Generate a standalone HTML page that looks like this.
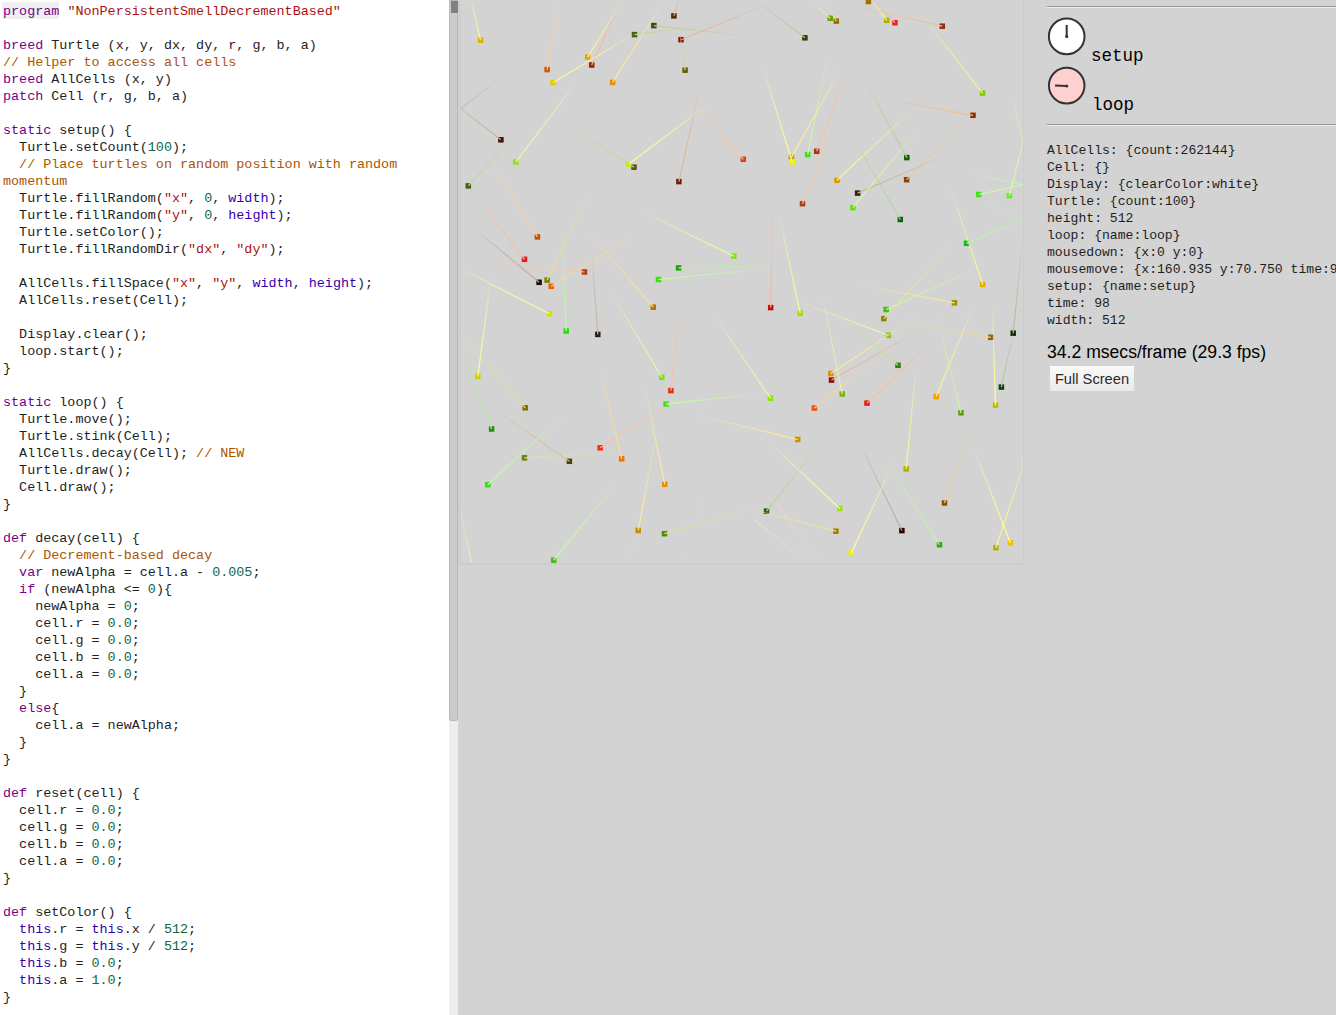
<!DOCTYPE html>
<html><head><meta charset="utf-8">
<style>
html,body{margin:0;padding:0;width:1336px;height:1015px;overflow:hidden;background:#d3d3d3;}
#code{position:absolute;left:0;top:0;width:449px;height:1015px;background:#fff;overflow:hidden;}
#lines{position:absolute;left:3px;top:3px;font-family:"Liberation Mono",monospace;font-size:13.42px;line-height:17px;color:#1e1e1e;white-space:pre;}
.ln{height:17px;}
i{font-style:normal;}
i.k{color:#708;} i.s{color:#a11;} i.c{color:#a50;} i.n{color:#164;} i.v{color:#30a;}
#hl{position:absolute;left:2px;top:2px;width:57px;height:17px;background:#f0f0f0;}
#track{position:absolute;left:449px;top:0;width:9px;height:1015px;background:#ededed;}
#thumb{position:absolute;left:449px;top:0;width:7px;height:719px;background:#cbcbcb;border:1px solid #b9b9b9;border-radius:0 0 2px 2px;}
#arrow{position:absolute;left:451px;top:1px;width:7px;height:12px;background:#808080;}
#canvas{position:absolute;left:458px;top:0;width:566px;height:565px;}
#panel{position:absolute;left:1047px;top:0;width:289px;}
.hr{position:absolute;left:1047px;width:289px;height:1px;background:#9a9a9a;border-bottom:1px solid #eee;}
.lbl{position:absolute;font-family:"Liberation Mono",monospace;font-size:17.5px;color:#000;}
#state{position:absolute;left:1047px;top:142px;font-family:"Liberation Mono",monospace;font-size:13.1px;line-height:17px;white-space:pre;color:#1e1e1e;}
#fps{position:absolute;left:1047px;top:342px;font-family:"Liberation Sans",sans-serif;font-size:17.6px;color:#000;white-space:pre;}
#fs{position:absolute;left:1050px;top:366px;width:84px;height:25px;background:linear-gradient(#fafafa,#e9e9e9);font-family:"Liberation Sans",sans-serif;font-size:14.67px;color:#2a2a2a;line-height:26px;text-align:center;}
</style></head><body>
<div id="code"><div id="hl"></div><div id="lines"><div class="ln"><i class="k">program</i> <i class="s">"NonPersistentSmellDecrementBased"</i></div><div class="ln">&#8203;</div><div class="ln"><i class="k">breed</i> Turtle (x, y, dx, dy, r, g, b, a)</div><div class="ln"><i class="c">// Helper to access all cells</i></div><div class="ln"><i class="k">breed</i> AllCells (x, y)</div><div class="ln"><i class="k">patch</i> Cell (r, g, b, a)</div><div class="ln">&#8203;</div><div class="ln"><i class="k">static</i> setup() {</div><div class="ln">  Turtle.setCount(<i class="n">100</i>);</div><div class="ln">  <i class="c">// Place turtles on random position with random</i></div><div class="ln"><i class="c">momentum</i></div><div class="ln">  Turtle.fillRandom(<i class="s">"x"</i>, <i class="n">0</i>, <i class="v">width</i>);</div><div class="ln">  Turtle.fillRandom(<i class="s">"y"</i>, <i class="n">0</i>, <i class="v">height</i>);</div><div class="ln">  Turtle.setColor();</div><div class="ln">  Turtle.fillRandomDir(<i class="s">"dx"</i>, <i class="s">"dy"</i>);</div><div class="ln">&#8203;</div><div class="ln">  AllCells.fillSpace(<i class="s">"x"</i>, <i class="s">"y"</i>, <i class="v">width</i>, <i class="v">height</i>);</div><div class="ln">  AllCells.reset(Cell);</div><div class="ln">&#8203;</div><div class="ln">  Display.clear();</div><div class="ln">  loop.start();</div><div class="ln">}</div><div class="ln">&#8203;</div><div class="ln"><i class="k">static</i> loop() {</div><div class="ln">  Turtle.move();</div><div class="ln">  Turtle.stink(Cell);</div><div class="ln">  AllCells.decay(Cell); <i class="c">// NEW</i></div><div class="ln">  Turtle.draw();</div><div class="ln">  Cell.draw();</div><div class="ln">}</div><div class="ln">&#8203;</div><div class="ln"><i class="k">def</i> decay(cell) {</div><div class="ln">  <i class="c">// Decrement-based decay</i></div><div class="ln">  <i class="k">var</i> newAlpha = cell.a - <i class="n">0.005</i>;</div><div class="ln">  <i class="k">if</i> (newAlpha &lt;= <i class="n">0</i>){</div><div class="ln">    newAlpha = <i class="n">0</i>;</div><div class="ln">    cell.r = <i class="n">0.0</i>;</div><div class="ln">    cell.g = <i class="n">0.0</i>;</div><div class="ln">    cell.b = <i class="n">0.0</i>;</div><div class="ln">    cell.a = <i class="n">0.0</i>;</div><div class="ln">  }</div><div class="ln">  <i class="k">else</i>{</div><div class="ln">    cell.a = newAlpha;</div><div class="ln">  }</div><div class="ln">}</div><div class="ln">&#8203;</div><div class="ln"><i class="k">def</i> reset(cell) {</div><div class="ln">  cell.r = <i class="n">0.0</i>;</div><div class="ln">  cell.g = <i class="n">0.0</i>;</div><div class="ln">  cell.b = <i class="n">0.0</i>;</div><div class="ln">  cell.a = <i class="n">0.0</i>;</div><div class="ln">}</div><div class="ln">&#8203;</div><div class="ln"><i class="k">def</i> setColor() {</div><div class="ln">  <i class="v">this</i>.r = <i class="v">this</i>.x / <i class="n">512</i>;</div><div class="ln">  <i class="v">this</i>.g = <i class="v">this</i>.y / <i class="n">512</i>;</div><div class="ln">  <i class="v">this</i>.b = <i class="n">0.0</i>;</div><div class="ln">  <i class="v">this</i>.a = <i class="n">1.0</i>;</div><div class="ln">}</div></div></div>
<div id="track"></div><div id="thumb"></div><div id="arrow"></div>
<svg id="canvas" width="566" height="565" viewBox="458 0 566 565">
<path d="M459.5 0 V564 H1024 V0" fill="none" stroke="#cbcbcb" stroke-width="1.6"/>
<clipPath id="cclip"><rect x="460" y="0" width="563" height="563"/></clipPath><defs><linearGradient id="g0" gradientUnits="userSpaceOnUse" x1="480.5" y1="40.2" x2="471.1" y2="0"><stop offset="0.0" stop-color="#fff996" stop-opacity="1.00"/><stop offset="0.25" stop-color="#fff996" stop-opacity="0.85"/><stop offset="0.5" stop-color="#fff996" stop-opacity="0.68"/><stop offset="0.75" stop-color="#fff996" stop-opacity="0.46"/><stop offset="1.0" stop-color="#fff996" stop-opacity="0.05"/></linearGradient><linearGradient id="g1" gradientUnits="userSpaceOnUse" x1="547.1" y1="69.6" x2="560.6" y2="0"><stop offset="0.0" stop-color="#ffcf96" stop-opacity="1.00"/><stop offset="0.25" stop-color="#ffcf96" stop-opacity="0.85"/><stop offset="0.5" stop-color="#ffcf96" stop-opacity="0.68"/><stop offset="0.75" stop-color="#ffcf96" stop-opacity="0.46"/><stop offset="1.0" stop-color="#ffcf96" stop-opacity="0.05"/></linearGradient><linearGradient id="g2" gradientUnits="userSpaceOnUse" x1="587.7" y1="57.1" x2="622.7" y2="0"><stop offset="0.0" stop-color="#fff296" stop-opacity="1.00"/><stop offset="0.25" stop-color="#fff296" stop-opacity="0.85"/><stop offset="0.5" stop-color="#fff296" stop-opacity="0.68"/><stop offset="0.75" stop-color="#fff296" stop-opacity="0.46"/><stop offset="1.0" stop-color="#fff296" stop-opacity="0.05"/></linearGradient><linearGradient id="g3" gradientUnits="userSpaceOnUse" x1="591.7" y1="65" x2="620.9" y2="1.9"><stop offset="0.0" stop-color="#f2b896" stop-opacity="1.00"/><stop offset="0.25" stop-color="#f2b896" stop-opacity="0.85"/><stop offset="0.5" stop-color="#f2b896" stop-opacity="0.68"/><stop offset="0.75" stop-color="#f2b896" stop-opacity="0.46"/><stop offset="1.0" stop-color="#f2b896" stop-opacity="0.05"/></linearGradient><linearGradient id="g4" gradientUnits="userSpaceOnUse" x1="553.1" y1="82.6" x2="634" y2="34"><stop offset="0.0" stop-color="#ffff96" stop-opacity="1.00"/><stop offset="0.25" stop-color="#ffff96" stop-opacity="0.85"/><stop offset="0.5" stop-color="#ffff96" stop-opacity="0.68"/><stop offset="0.75" stop-color="#ffff96" stop-opacity="0.46"/><stop offset="1.0" stop-color="#ffff96" stop-opacity="0.05"/></linearGradient><linearGradient id="g5" gradientUnits="userSpaceOnUse" x1="634.5" y1="34.6" x2="714" y2="24.3"><stop offset="0.0" stop-color="#c6d59d" stop-opacity="1.00"/><stop offset="0.25" stop-color="#c6d59d" stop-opacity="0.85"/><stop offset="0.5" stop-color="#c6d59d" stop-opacity="0.68"/><stop offset="0.75" stop-color="#c6d59d" stop-opacity="0.46"/><stop offset="1.0" stop-color="#c6d59d" stop-opacity="0.05"/></linearGradient><linearGradient id="g6" gradientUnits="userSpaceOnUse" x1="612.6" y1="82.4" x2="664.5" y2="0"><stop offset="0.0" stop-color="#ffea96" stop-opacity="1.00"/><stop offset="0.25" stop-color="#ffea96" stop-opacity="0.85"/><stop offset="0.5" stop-color="#ffea96" stop-opacity="0.68"/><stop offset="0.75" stop-color="#ffea96" stop-opacity="0.46"/><stop offset="1.0" stop-color="#ffea96" stop-opacity="0.05"/></linearGradient><linearGradient id="g7" gradientUnits="userSpaceOnUse" x1="500.9" y1="139.8" x2="460.8" y2="108.6"><stop offset="0.0" stop-color="#c6b196" stop-opacity="1.00"/><stop offset="0.25" stop-color="#c6b196" stop-opacity="0.92"/><stop offset="0.5" stop-color="#c6b196" stop-opacity="0.84"/><stop offset="0.75" stop-color="#c6b196" stop-opacity="0.75"/><stop offset="1.0" stop-color="#c6b196" stop-opacity="0.66"/></linearGradient><linearGradient id="g8" gradientUnits="userSpaceOnUse" x1="460.8" y1="108.6" x2="497.3" y2="80.5"><stop offset="0.0" stop-color="#c6b196" stop-opacity="0.66"/><stop offset="0.25" stop-color="#c6b196" stop-opacity="0.56"/><stop offset="0.5" stop-color="#c6b196" stop-opacity="0.45"/><stop offset="0.75" stop-color="#c6b196" stop-opacity="0.31"/><stop offset="1.0" stop-color="#c6b196" stop-opacity="0.05"/></linearGradient><linearGradient id="g9" gradientUnits="userSpaceOnUse" x1="515.8" y1="162.1" x2="576" y2="82.4"><stop offset="0.0" stop-color="#eaffa4" stop-opacity="1.00"/><stop offset="0.25" stop-color="#eaffa4" stop-opacity="0.85"/><stop offset="0.5" stop-color="#eaffa4" stop-opacity="0.68"/><stop offset="0.75" stop-color="#eaffa4" stop-opacity="0.46"/><stop offset="1.0" stop-color="#eaffa4" stop-opacity="0.05"/></linearGradient><linearGradient id="g10" gradientUnits="userSpaceOnUse" x1="628.3" y1="164.2" x2="708.5" y2="103.9"><stop offset="0.0" stop-color="#ffff96" stop-opacity="1.00"/><stop offset="0.25" stop-color="#ffff96" stop-opacity="0.85"/><stop offset="0.5" stop-color="#ffff96" stop-opacity="0.68"/><stop offset="0.75" stop-color="#ffff96" stop-opacity="0.46"/><stop offset="1.0" stop-color="#ffff96" stop-opacity="0.05"/></linearGradient><linearGradient id="g11" gradientUnits="userSpaceOnUse" x1="634" y1="167.2" x2="553.5" y2="115.1"><stop offset="0.0" stop-color="#d5ce9d" stop-opacity="1.00"/><stop offset="0.25" stop-color="#d5ce9d" stop-opacity="0.85"/><stop offset="0.5" stop-color="#d5ce9d" stop-opacity="0.68"/><stop offset="0.75" stop-color="#d5ce9d" stop-opacity="0.46"/><stop offset="1.0" stop-color="#d5ce9d" stop-opacity="0.05"/></linearGradient><linearGradient id="g12" gradientUnits="userSpaceOnUse" x1="468.3" y1="185.9" x2="534.7" y2="114.2"><stop offset="0.0" stop-color="#c6d59d" stop-opacity="1.00"/><stop offset="0.25" stop-color="#c6d59d" stop-opacity="0.85"/><stop offset="0.5" stop-color="#c6d59d" stop-opacity="0.68"/><stop offset="0.75" stop-color="#c6d59d" stop-opacity="0.46"/><stop offset="1.0" stop-color="#c6d59d" stop-opacity="0.05"/></linearGradient><linearGradient id="g13" gradientUnits="userSpaceOnUse" x1="673.9" y1="15.9" x2="678.6" y2="0"><stop offset="0.0" stop-color="#cebf96" stop-opacity="1.00"/><stop offset="0.25" stop-color="#cebf96" stop-opacity="0.85"/><stop offset="0.5" stop-color="#cebf96" stop-opacity="0.68"/><stop offset="0.75" stop-color="#cebf96" stop-opacity="0.46"/><stop offset="1.0" stop-color="#cebf96" stop-opacity="0.05"/></linearGradient><linearGradient id="g14" gradientUnits="userSpaceOnUse" x1="653.9" y1="25.6" x2="751.6" y2="36.5"><stop offset="0.0" stop-color="#bfce9d" stop-opacity="1.00"/><stop offset="0.25" stop-color="#bfce9d" stop-opacity="0.85"/><stop offset="0.5" stop-color="#bfce9d" stop-opacity="0.68"/><stop offset="0.75" stop-color="#bfce9d" stop-opacity="0.46"/><stop offset="1.0" stop-color="#bfce9d" stop-opacity="0.05"/></linearGradient><linearGradient id="g15" gradientUnits="userSpaceOnUse" x1="681" y1="39.7" x2="766.5" y2="4.7"><stop offset="0.0" stop-color="#eab196" stop-opacity="1.00"/><stop offset="0.25" stop-color="#eab196" stop-opacity="0.85"/><stop offset="0.5" stop-color="#eab196" stop-opacity="0.68"/><stop offset="0.75" stop-color="#eab196" stop-opacity="0.46"/><stop offset="1.0" stop-color="#eab196" stop-opacity="0.05"/></linearGradient><linearGradient id="g16" gradientUnits="userSpaceOnUse" x1="685.1" y1="70.2" x2="679" y2="28"><stop offset="0.0" stop-color="#d5d596" stop-opacity="1.00"/><stop offset="0.25" stop-color="#d5d596" stop-opacity="0.85"/><stop offset="0.5" stop-color="#d5d596" stop-opacity="0.68"/><stop offset="0.75" stop-color="#d5d596" stop-opacity="0.46"/><stop offset="1.0" stop-color="#d5d596" stop-opacity="0.05"/></linearGradient><linearGradient id="g17" gradientUnits="userSpaceOnUse" x1="804.9" y1="37.8" x2="755.3" y2="0"><stop offset="0.0" stop-color="#bfc696" stop-opacity="1.00"/><stop offset="0.25" stop-color="#bfc696" stop-opacity="0.85"/><stop offset="0.5" stop-color="#bfc696" stop-opacity="0.68"/><stop offset="0.75" stop-color="#bfc696" stop-opacity="0.46"/><stop offset="1.0" stop-color="#bfc696" stop-opacity="0.05"/></linearGradient><linearGradient id="g18" gradientUnits="userSpaceOnUse" x1="830.2" y1="18.3" x2="809.6" y2="0"><stop offset="0.0" stop-color="#dcf296" stop-opacity="1.00"/><stop offset="0.25" stop-color="#dcf296" stop-opacity="0.85"/><stop offset="0.5" stop-color="#dcf296" stop-opacity="0.68"/><stop offset="0.75" stop-color="#dcf296" stop-opacity="0.46"/><stop offset="1.0" stop-color="#dcf296" stop-opacity="0.05"/></linearGradient><linearGradient id="g19" gradientUnits="userSpaceOnUse" x1="743.3" y1="159.3" x2="677.6" y2="86.1"><stop offset="0.0" stop-color="#ffc69d" stop-opacity="1.00"/><stop offset="0.25" stop-color="#ffc69d" stop-opacity="0.85"/><stop offset="0.5" stop-color="#ffc69d" stop-opacity="0.68"/><stop offset="0.75" stop-color="#ffc69d" stop-opacity="0.46"/><stop offset="1.0" stop-color="#ffc69d" stop-opacity="0.05"/></linearGradient><linearGradient id="g20" gradientUnits="userSpaceOnUse" x1="678.9" y1="181.6" x2="700.1" y2="86.1"><stop offset="0.0" stop-color="#dcb896" stop-opacity="1.00"/><stop offset="0.25" stop-color="#dcb896" stop-opacity="0.85"/><stop offset="0.5" stop-color="#dcb896" stop-opacity="0.68"/><stop offset="0.75" stop-color="#dcb896" stop-opacity="0.46"/><stop offset="1.0" stop-color="#dcb896" stop-opacity="0.05"/></linearGradient><linearGradient id="g21" gradientUnits="userSpaceOnUse" x1="791.4" y1="157.2" x2="839.8" y2="70.9"><stop offset="0.0" stop-color="#fff296" stop-opacity="1.00"/><stop offset="0.25" stop-color="#fff296" stop-opacity="0.85"/><stop offset="0.5" stop-color="#fff296" stop-opacity="0.68"/><stop offset="0.75" stop-color="#fff296" stop-opacity="0.46"/><stop offset="1.0" stop-color="#fff296" stop-opacity="0.05"/></linearGradient><linearGradient id="g22" gradientUnits="userSpaceOnUse" x1="792.2" y1="161.9" x2="762.8" y2="67.4"><stop offset="0.0" stop-color="#ffff96" stop-opacity="1.00"/><stop offset="0.25" stop-color="#ffff96" stop-opacity="0.85"/><stop offset="0.5" stop-color="#ffff96" stop-opacity="0.68"/><stop offset="0.75" stop-color="#ffff96" stop-opacity="0.46"/><stop offset="1.0" stop-color="#ffff96" stop-opacity="0.05"/></linearGradient><linearGradient id="g23" gradientUnits="userSpaceOnUse" x1="807.7" y1="154.6" x2="827.4" y2="58"><stop offset="0.0" stop-color="#c6ff9d" stop-opacity="1.00"/><stop offset="0.25" stop-color="#c6ff9d" stop-opacity="0.85"/><stop offset="0.5" stop-color="#c6ff9d" stop-opacity="0.68"/><stop offset="0.75" stop-color="#c6ff9d" stop-opacity="0.46"/><stop offset="1.0" stop-color="#c6ff9d" stop-opacity="0.05"/></linearGradient><linearGradient id="g24" gradientUnits="userSpaceOnUse" x1="816.7" y1="151.3" x2="851.6" y2="60"><stop offset="0.0" stop-color="#f9bf9d" stop-opacity="1.00"/><stop offset="0.25" stop-color="#f9bf9d" stop-opacity="0.85"/><stop offset="0.5" stop-color="#f9bf9d" stop-opacity="0.68"/><stop offset="0.75" stop-color="#f9bf9d" stop-opacity="0.46"/><stop offset="1.0" stop-color="#f9bf9d" stop-opacity="0.05"/></linearGradient><linearGradient id="g25" gradientUnits="userSpaceOnUse" x1="836.3" y1="21.1" x2="828" y2="5"><stop offset="0.0" stop-color="#eadc96" stop-opacity="1.00"/><stop offset="0.25" stop-color="#eadc96" stop-opacity="0.85"/><stop offset="0.5" stop-color="#eadc96" stop-opacity="0.68"/><stop offset="0.75" stop-color="#eadc96" stop-opacity="0.46"/><stop offset="1.0" stop-color="#eadc96" stop-opacity="0.05"/></linearGradient><linearGradient id="g26" gradientUnits="userSpaceOnUse" x1="886.7" y1="20.3" x2="871.3" y2="0"><stop offset="0.0" stop-color="#f9f996" stop-opacity="1.00"/><stop offset="0.25" stop-color="#f9f996" stop-opacity="0.85"/><stop offset="0.5" stop-color="#f9f996" stop-opacity="0.68"/><stop offset="0.75" stop-color="#f9f996" stop-opacity="0.46"/><stop offset="1.0" stop-color="#f9f996" stop-opacity="0.05"/></linearGradient><linearGradient id="g27" gradientUnits="userSpaceOnUse" x1="895" y1="22.7" x2="873.3" y2="0"><stop offset="0.0" stop-color="#ffb8a4" stop-opacity="1.00"/><stop offset="0.25" stop-color="#ffb8a4" stop-opacity="0.85"/><stop offset="0.5" stop-color="#ffb8a4" stop-opacity="0.68"/><stop offset="0.75" stop-color="#ffb8a4" stop-opacity="0.46"/><stop offset="1.0" stop-color="#ffb8a4" stop-opacity="0.05"/></linearGradient><linearGradient id="g28" gradientUnits="userSpaceOnUse" x1="942.3" y1="26.2" x2="846.7" y2="3.9"><stop offset="0.0" stop-color="#eabf9d" stop-opacity="1.00"/><stop offset="0.25" stop-color="#eabf9d" stop-opacity="0.85"/><stop offset="0.5" stop-color="#eabf9d" stop-opacity="0.68"/><stop offset="0.75" stop-color="#eabf9d" stop-opacity="0.46"/><stop offset="1.0" stop-color="#eabf9d" stop-opacity="0.05"/></linearGradient><linearGradient id="g29" gradientUnits="userSpaceOnUse" x1="982.5" y1="93.2" x2="922.2" y2="15.8"><stop offset="0.0" stop-color="#e3ff96" stop-opacity="1.00"/><stop offset="0.25" stop-color="#e3ff96" stop-opacity="0.85"/><stop offset="0.5" stop-color="#e3ff96" stop-opacity="0.68"/><stop offset="0.75" stop-color="#e3ff96" stop-opacity="0.46"/><stop offset="1.0" stop-color="#e3ff96" stop-opacity="0.05"/></linearGradient><linearGradient id="g30" gradientUnits="userSpaceOnUse" x1="973" y1="115.3" x2="876.3" y2="97.5"><stop offset="0.0" stop-color="#eabf96" stop-opacity="1.00"/><stop offset="0.25" stop-color="#eabf96" stop-opacity="0.85"/><stop offset="0.5" stop-color="#eabf96" stop-opacity="0.68"/><stop offset="0.75" stop-color="#eabf96" stop-opacity="0.46"/><stop offset="1.0" stop-color="#eabf96" stop-opacity="0.05"/></linearGradient><linearGradient id="g31" gradientUnits="userSpaceOnUse" x1="906.6" y1="179.7" x2="969.9" y2="113.3"><stop offset="0.0" stop-color="#eac696" stop-opacity="1.00"/><stop offset="0.25" stop-color="#eac696" stop-opacity="0.85"/><stop offset="0.5" stop-color="#eac696" stop-opacity="0.68"/><stop offset="0.75" stop-color="#eac696" stop-opacity="0.46"/><stop offset="1.0" stop-color="#eac696" stop-opacity="0.05"/></linearGradient><linearGradient id="g32" gradientUnits="userSpaceOnUse" x1="906.8" y1="157.6" x2="859.5" y2="70.9"><stop offset="0.0" stop-color="#b1d596" stop-opacity="1.00"/><stop offset="0.25" stop-color="#b1d596" stop-opacity="0.85"/><stop offset="0.5" stop-color="#b1d596" stop-opacity="0.68"/><stop offset="0.75" stop-color="#b1d596" stop-opacity="0.46"/><stop offset="1.0" stop-color="#b1d596" stop-opacity="0.05"/></linearGradient><linearGradient id="g33" gradientUnits="userSpaceOnUse" x1="836.9" y1="180.3" x2="909.8" y2="112.3"><stop offset="0.0" stop-color="#fff296" stop-opacity="1.00"/><stop offset="0.25" stop-color="#fff296" stop-opacity="0.85"/><stop offset="0.5" stop-color="#fff296" stop-opacity="0.68"/><stop offset="0.75" stop-color="#fff296" stop-opacity="0.46"/><stop offset="1.0" stop-color="#fff296" stop-opacity="0.05"/></linearGradient><linearGradient id="g34" gradientUnits="userSpaceOnUse" x1="857.6" y1="193.1" x2="944.3" y2="155.7"><stop offset="0.0" stop-color="#c6b896" stop-opacity="1.00"/><stop offset="0.25" stop-color="#c6b896" stop-opacity="0.85"/><stop offset="0.5" stop-color="#c6b896" stop-opacity="0.68"/><stop offset="0.75" stop-color="#c6b896" stop-opacity="0.46"/><stop offset="1.0" stop-color="#c6b896" stop-opacity="0.05"/></linearGradient><linearGradient id="g35" gradientUnits="userSpaceOnUse" x1="978.7" y1="194.5" x2="1023" y2="184.8"><stop offset="0.0" stop-color="#c6ffa4" stop-opacity="1.00"/><stop offset="0.25" stop-color="#c6ffa4" stop-opacity="0.93"/><stop offset="0.5" stop-color="#c6ffa4" stop-opacity="0.86"/><stop offset="0.75" stop-color="#c6ffa4" stop-opacity="0.79"/><stop offset="1.0" stop-color="#c6ffa4" stop-opacity="0.70"/></linearGradient><linearGradient id="g36" gradientUnits="userSpaceOnUse" x1="1023" y1="184.8" x2="971.8" y2="173.4"><stop offset="0.0" stop-color="#c6ffa4" stop-opacity="0.70"/><stop offset="0.25" stop-color="#c6ffa4" stop-opacity="0.60"/><stop offset="0.5" stop-color="#c6ffa4" stop-opacity="0.48"/><stop offset="0.75" stop-color="#c6ffa4" stop-opacity="0.33"/><stop offset="1.0" stop-color="#c6ffa4" stop-opacity="0.05"/></linearGradient><linearGradient id="g37" gradientUnits="userSpaceOnUse" x1="1009.3" y1="195.7" x2="1023" y2="141.9"><stop offset="0.0" stop-color="#d5ffa4" stop-opacity="1.00"/><stop offset="0.25" stop-color="#d5ffa4" stop-opacity="0.92"/><stop offset="0.5" stop-color="#d5ffa4" stop-opacity="0.83"/><stop offset="0.75" stop-color="#d5ffa4" stop-opacity="0.73"/><stop offset="1.0" stop-color="#d5ffa4" stop-opacity="0.63"/></linearGradient><linearGradient id="g38" gradientUnits="userSpaceOnUse" x1="1023" y1="141.9" x2="1013.2" y2="99.5"><stop offset="0.0" stop-color="#d5ffa4" stop-opacity="0.63"/><stop offset="0.25" stop-color="#d5ffa4" stop-opacity="0.54"/><stop offset="0.5" stop-color="#d5ffa4" stop-opacity="0.43"/><stop offset="0.75" stop-color="#d5ffa4" stop-opacity="0.30"/><stop offset="1.0" stop-color="#d5ffa4" stop-opacity="0.05"/></linearGradient><linearGradient id="g39" gradientUnits="userSpaceOnUse" x1="524.5" y1="259.3" x2="469.2" y2="186.9"><stop offset="0.0" stop-color="#ffb8a4" stop-opacity="1.00"/><stop offset="0.25" stop-color="#ffb8a4" stop-opacity="0.85"/><stop offset="0.5" stop-color="#ffb8a4" stop-opacity="0.68"/><stop offset="0.75" stop-color="#ffb8a4" stop-opacity="0.46"/><stop offset="1.0" stop-color="#ffb8a4" stop-opacity="0.05"/></linearGradient><linearGradient id="g40" gradientUnits="userSpaceOnUse" x1="537.4" y1="236.9" x2="486" y2="152.6"><stop offset="0.0" stop-color="#ffce96" stop-opacity="1.00"/><stop offset="0.25" stop-color="#ffce96" stop-opacity="0.85"/><stop offset="0.5" stop-color="#ffce96" stop-opacity="0.68"/><stop offset="0.75" stop-color="#ffce96" stop-opacity="0.46"/><stop offset="1.0" stop-color="#ffce96" stop-opacity="0.05"/></linearGradient><linearGradient id="g41" gradientUnits="userSpaceOnUse" x1="539.1" y1="282.3" x2="474.8" y2="229"><stop offset="0.0" stop-color="#b8ad96" stop-opacity="1.00"/><stop offset="0.25" stop-color="#b8ad96" stop-opacity="0.85"/><stop offset="0.5" stop-color="#b8ad96" stop-opacity="0.68"/><stop offset="0.75" stop-color="#b8ad96" stop-opacity="0.46"/><stop offset="1.0" stop-color="#b8ad96" stop-opacity="0.05"/></linearGradient><linearGradient id="g42" gradientUnits="userSpaceOnUse" x1="547.1" y1="280.1" x2="589" y2="190.6"><stop offset="0.0" stop-color="#e3e396" stop-opacity="1.00"/><stop offset="0.25" stop-color="#e3e396" stop-opacity="0.85"/><stop offset="0.5" stop-color="#e3e396" stop-opacity="0.68"/><stop offset="0.75" stop-color="#e3e396" stop-opacity="0.46"/><stop offset="1.0" stop-color="#e3e396" stop-opacity="0.05"/></linearGradient><linearGradient id="g43" gradientUnits="userSpaceOnUse" x1="551.2" y1="286.3" x2="635.8" y2="234.6"><stop offset="0.0" stop-color="#ffd596" stop-opacity="1.00"/><stop offset="0.25" stop-color="#ffd596" stop-opacity="0.85"/><stop offset="0.5" stop-color="#ffd596" stop-opacity="0.68"/><stop offset="0.75" stop-color="#ffd596" stop-opacity="0.46"/><stop offset="1.0" stop-color="#ffd596" stop-opacity="0.05"/></linearGradient><linearGradient id="g44" gradientUnits="userSpaceOnUse" x1="584.5" y1="272" x2="486.1" y2="259.9"><stop offset="0.0" stop-color="#f9c69d" stop-opacity="1.00"/><stop offset="0.25" stop-color="#f9c69d" stop-opacity="0.85"/><stop offset="0.5" stop-color="#f9c69d" stop-opacity="0.68"/><stop offset="0.75" stop-color="#f9c69d" stop-opacity="0.46"/><stop offset="1.0" stop-color="#f9c69d" stop-opacity="0.05"/></linearGradient><linearGradient id="g45" gradientUnits="userSpaceOnUse" x1="549.5" y1="313.8" x2="461.7" y2="269.2"><stop offset="0.0" stop-color="#ffff96" stop-opacity="1.00"/><stop offset="0.25" stop-color="#ffff96" stop-opacity="0.85"/><stop offset="0.5" stop-color="#ffff96" stop-opacity="0.68"/><stop offset="0.75" stop-color="#ffff96" stop-opacity="0.46"/><stop offset="1.0" stop-color="#ffff96" stop-opacity="0.05"/></linearGradient><linearGradient id="g46" gradientUnits="userSpaceOnUse" x1="566.2" y1="331" x2="561.9" y2="232.7"><stop offset="0.0" stop-color="#b8ff9d" stop-opacity="1.00"/><stop offset="0.25" stop-color="#b8ff9d" stop-opacity="0.85"/><stop offset="0.5" stop-color="#b8ff9d" stop-opacity="0.68"/><stop offset="0.75" stop-color="#b8ff9d" stop-opacity="0.46"/><stop offset="1.0" stop-color="#b8ff9d" stop-opacity="0.05"/></linearGradient><linearGradient id="g47" gradientUnits="userSpaceOnUse" x1="597.8" y1="334.4" x2="591.8" y2="254.3"><stop offset="0.0" stop-color="#bfb89d" stop-opacity="1.00"/><stop offset="0.25" stop-color="#bfb89d" stop-opacity="0.85"/><stop offset="0.5" stop-color="#bfb89d" stop-opacity="0.68"/><stop offset="0.75" stop-color="#bfb89d" stop-opacity="0.46"/><stop offset="1.0" stop-color="#bfb89d" stop-opacity="0.05"/></linearGradient><linearGradient id="g48" gradientUnits="userSpaceOnUse" x1="477.8" y1="376.3" x2="490.8" y2="278.6"><stop offset="0.0" stop-color="#ffff96" stop-opacity="1.00"/><stop offset="0.25" stop-color="#ffff96" stop-opacity="0.85"/><stop offset="0.5" stop-color="#ffff96" stop-opacity="0.68"/><stop offset="0.75" stop-color="#ffff96" stop-opacity="0.46"/><stop offset="1.0" stop-color="#ffff96" stop-opacity="0.05"/></linearGradient><linearGradient id="g49" gradientUnits="userSpaceOnUse" x1="802.5" y1="203.7" x2="839" y2="112"><stop offset="0.0" stop-color="#f9c69d" stop-opacity="1.00"/><stop offset="0.25" stop-color="#f9c69d" stop-opacity="0.85"/><stop offset="0.5" stop-color="#f9c69d" stop-opacity="0.68"/><stop offset="0.75" stop-color="#f9c69d" stop-opacity="0.46"/><stop offset="1.0" stop-color="#f9c69d" stop-opacity="0.05"/></linearGradient><linearGradient id="g50" gradientUnits="userSpaceOnUse" x1="733.8" y1="256.1" x2="644.9" y2="213.1"><stop offset="0.0" stop-color="#e3ff9d" stop-opacity="1.00"/><stop offset="0.25" stop-color="#e3ff9d" stop-opacity="0.85"/><stop offset="0.5" stop-color="#e3ff9d" stop-opacity="0.68"/><stop offset="0.75" stop-color="#e3ff9d" stop-opacity="0.46"/><stop offset="1.0" stop-color="#e3ff9d" stop-opacity="0.05"/></linearGradient><linearGradient id="g51" gradientUnits="userSpaceOnUse" x1="678.6" y1="267.9" x2="777.8" y2="265.5"><stop offset="0.0" stop-color="#b8f29d" stop-opacity="1.00"/><stop offset="0.25" stop-color="#b8f29d" stop-opacity="0.85"/><stop offset="0.5" stop-color="#b8f29d" stop-opacity="0.68"/><stop offset="0.75" stop-color="#b8f29d" stop-opacity="0.46"/><stop offset="1.0" stop-color="#b8f29d" stop-opacity="0.05"/></linearGradient><linearGradient id="g52" gradientUnits="userSpaceOnUse" x1="658.5" y1="279.5" x2="757.2" y2="269.6"><stop offset="0.0" stop-color="#c6ff9d" stop-opacity="1.00"/><stop offset="0.25" stop-color="#c6ff9d" stop-opacity="0.85"/><stop offset="0.5" stop-color="#c6ff9d" stop-opacity="0.68"/><stop offset="0.75" stop-color="#c6ff9d" stop-opacity="0.46"/><stop offset="1.0" stop-color="#c6ff9d" stop-opacity="0.05"/></linearGradient><linearGradient id="g53" gradientUnits="userSpaceOnUse" x1="653.3" y1="307.2" x2="589" y2="232.7"><stop offset="0.0" stop-color="#ffdc96" stop-opacity="1.00"/><stop offset="0.25" stop-color="#ffdc96" stop-opacity="0.85"/><stop offset="0.5" stop-color="#ffdc96" stop-opacity="0.68"/><stop offset="0.75" stop-color="#ffdc96" stop-opacity="0.46"/><stop offset="1.0" stop-color="#ffdc96" stop-opacity="0.05"/></linearGradient><linearGradient id="g54" gradientUnits="userSpaceOnUse" x1="770.7" y1="307.6" x2="772.5" y2="208.4"><stop offset="0.0" stop-color="#ffb19d" stop-opacity="1.00"/><stop offset="0.25" stop-color="#ffb19d" stop-opacity="0.85"/><stop offset="0.5" stop-color="#ffb19d" stop-opacity="0.68"/><stop offset="0.75" stop-color="#ffb19d" stop-opacity="0.46"/><stop offset="1.0" stop-color="#ffb19d" stop-opacity="0.05"/></linearGradient><linearGradient id="g55" gradientUnits="userSpaceOnUse" x1="800.2" y1="313.2" x2="779.3" y2="215.9"><stop offset="0.0" stop-color="#f2ff96" stop-opacity="1.00"/><stop offset="0.25" stop-color="#f2ff96" stop-opacity="0.85"/><stop offset="0.5" stop-color="#f2ff96" stop-opacity="0.68"/><stop offset="0.75" stop-color="#f2ff96" stop-opacity="0.46"/><stop offset="1.0" stop-color="#f2ff96" stop-opacity="0.05"/></linearGradient><linearGradient id="g56" gradientUnits="userSpaceOnUse" x1="830.8" y1="373.5" x2="912.7" y2="319"><stop offset="0.0" stop-color="#ffea96" stop-opacity="1.00"/><stop offset="0.25" stop-color="#ffea96" stop-opacity="0.85"/><stop offset="0.5" stop-color="#ffea96" stop-opacity="0.68"/><stop offset="0.75" stop-color="#ffea96" stop-opacity="0.46"/><stop offset="1.0" stop-color="#ffea96" stop-opacity="0.05"/></linearGradient><linearGradient id="g57" gradientUnits="userSpaceOnUse" x1="831.5" y1="380.1" x2="916.7" y2="331.8"><stop offset="0.0" stop-color="#eab196" stop-opacity="1.00"/><stop offset="0.25" stop-color="#eab196" stop-opacity="0.85"/><stop offset="0.5" stop-color="#eab196" stop-opacity="0.68"/><stop offset="0.75" stop-color="#eab196" stop-opacity="0.46"/><stop offset="1.0" stop-color="#eab196" stop-opacity="0.05"/></linearGradient><linearGradient id="g58" gradientUnits="userSpaceOnUse" x1="852.8" y1="207.7" x2="916.7" y2="131"><stop offset="0.0" stop-color="#d5ff9d" stop-opacity="1.00"/><stop offset="0.25" stop-color="#d5ff9d" stop-opacity="0.85"/><stop offset="0.5" stop-color="#d5ff9d" stop-opacity="0.68"/><stop offset="0.75" stop-color="#d5ff9d" stop-opacity="0.46"/><stop offset="1.0" stop-color="#d5ff9d" stop-opacity="0.05"/></linearGradient><linearGradient id="g59" gradientUnits="userSpaceOnUse" x1="900.3" y1="219.5" x2="851.6" y2="135"><stop offset="0.0" stop-color="#b1d59d" stop-opacity="1.00"/><stop offset="0.25" stop-color="#b1d59d" stop-opacity="0.85"/><stop offset="0.5" stop-color="#b1d59d" stop-opacity="0.68"/><stop offset="0.75" stop-color="#b1d59d" stop-opacity="0.46"/><stop offset="1.0" stop-color="#b1d59d" stop-opacity="0.05"/></linearGradient><linearGradient id="g60" gradientUnits="userSpaceOnUse" x1="966.5" y1="243.3" x2="1022" y2="219.5"><stop offset="0.0" stop-color="#b1ff9d" stop-opacity="1.00"/><stop offset="0.25" stop-color="#b1ff9d" stop-opacity="0.91"/><stop offset="0.5" stop-color="#b1ff9d" stop-opacity="0.81"/><stop offset="0.75" stop-color="#b1ff9d" stop-opacity="0.70"/><stop offset="1.0" stop-color="#b1ff9d" stop-opacity="0.57"/></linearGradient><linearGradient id="g61" gradientUnits="userSpaceOnUse" x1="1022" y1="219.5" x2="989.6" y2="204.7"><stop offset="0.0" stop-color="#b1ff9d" stop-opacity="0.57"/><stop offset="0.25" stop-color="#b1ff9d" stop-opacity="0.49"/><stop offset="0.5" stop-color="#b1ff9d" stop-opacity="0.40"/><stop offset="0.75" stop-color="#b1ff9d" stop-opacity="0.28"/><stop offset="1.0" stop-color="#b1ff9d" stop-opacity="0.05"/></linearGradient><linearGradient id="g62" gradientUnits="userSpaceOnUse" x1="982.7" y1="284.5" x2="951.2" y2="190.9"><stop offset="0.0" stop-color="#fff996" stop-opacity="1.00"/><stop offset="0.25" stop-color="#fff996" stop-opacity="0.85"/><stop offset="0.5" stop-color="#fff996" stop-opacity="0.68"/><stop offset="0.75" stop-color="#fff996" stop-opacity="0.46"/><stop offset="1.0" stop-color="#fff996" stop-opacity="0.05"/></linearGradient><linearGradient id="g63" gradientUnits="userSpaceOnUse" x1="954.5" y1="302.8" x2="857.6" y2="284.5"><stop offset="0.0" stop-color="#f2ea96" stop-opacity="1.00"/><stop offset="0.25" stop-color="#f2ea96" stop-opacity="0.85"/><stop offset="0.5" stop-color="#f2ea96" stop-opacity="0.68"/><stop offset="0.75" stop-color="#f2ea96" stop-opacity="0.46"/><stop offset="1.0" stop-color="#f2ea96" stop-opacity="0.05"/></linearGradient><linearGradient id="g64" gradientUnits="userSpaceOnUse" x1="886.1" y1="309.5" x2="973.8" y2="269.7"><stop offset="0.0" stop-color="#c6ff9d" stop-opacity="1.00"/><stop offset="0.25" stop-color="#c6ff9d" stop-opacity="0.85"/><stop offset="0.5" stop-color="#c6ff9d" stop-opacity="0.68"/><stop offset="0.75" stop-color="#c6ff9d" stop-opacity="0.46"/><stop offset="1.0" stop-color="#c6ff9d" stop-opacity="0.05"/></linearGradient><linearGradient id="g65" gradientUnits="userSpaceOnUse" x1="883.8" y1="318.6" x2="950.2" y2="246.1"><stop offset="0.0" stop-color="#eae396" stop-opacity="1.00"/><stop offset="0.25" stop-color="#eae396" stop-opacity="0.85"/><stop offset="0.5" stop-color="#eae396" stop-opacity="0.68"/><stop offset="0.75" stop-color="#eae396" stop-opacity="0.46"/><stop offset="1.0" stop-color="#eae396" stop-opacity="0.05"/></linearGradient><linearGradient id="g66" gradientUnits="userSpaceOnUse" x1="888.3" y1="335.3" x2="800" y2="302"><stop offset="0.0" stop-color="#eaff9d" stop-opacity="1.00"/><stop offset="0.25" stop-color="#eaff9d" stop-opacity="0.85"/><stop offset="0.5" stop-color="#eaff9d" stop-opacity="0.68"/><stop offset="0.75" stop-color="#eaff9d" stop-opacity="0.46"/><stop offset="1.0" stop-color="#eaff9d" stop-opacity="0.05"/></linearGradient><linearGradient id="g67" gradientUnits="userSpaceOnUse" x1="898" y1="365.3" x2="823" y2="303"><stop offset="0.0" stop-color="#bfe39d" stop-opacity="1.00"/><stop offset="0.25" stop-color="#bfe39d" stop-opacity="0.85"/><stop offset="0.5" stop-color="#bfe39d" stop-opacity="0.68"/><stop offset="0.75" stop-color="#bfe39d" stop-opacity="0.46"/><stop offset="1.0" stop-color="#bfe39d" stop-opacity="0.05"/></linearGradient><linearGradient id="g68" gradientUnits="userSpaceOnUse" x1="990.8" y1="337.3" x2="893" y2="321"><stop offset="0.0" stop-color="#ead59d" stop-opacity="1.00"/><stop offset="0.25" stop-color="#ead59d" stop-opacity="0.85"/><stop offset="0.5" stop-color="#ead59d" stop-opacity="0.68"/><stop offset="0.75" stop-color="#ead59d" stop-opacity="0.46"/><stop offset="1.0" stop-color="#ead59d" stop-opacity="0.05"/></linearGradient><linearGradient id="g69" gradientUnits="userSpaceOnUse" x1="1013.2" y1="333.2" x2="1022" y2="246"><stop offset="0.0" stop-color="#b1bf96" stop-opacity="1.00"/><stop offset="0.25" stop-color="#b1bf96" stop-opacity="0.85"/><stop offset="0.5" stop-color="#b1bf96" stop-opacity="0.68"/><stop offset="0.75" stop-color="#b1bf96" stop-opacity="0.46"/><stop offset="1.0" stop-color="#b1bf96" stop-opacity="0.05"/></linearGradient><linearGradient id="g70" gradientUnits="userSpaceOnUse" x1="525.2" y1="407.8" x2="460.8" y2="332.9"><stop offset="0.0" stop-color="#e3dc96" stop-opacity="1.00"/><stop offset="0.25" stop-color="#e3dc96" stop-opacity="0.85"/><stop offset="0.5" stop-color="#e3dc96" stop-opacity="0.68"/><stop offset="0.75" stop-color="#e3dc96" stop-opacity="0.46"/><stop offset="1.0" stop-color="#e3dc96" stop-opacity="0.05"/></linearGradient><linearGradient id="g71" gradientUnits="userSpaceOnUse" x1="491.6" y1="429" x2="460.8" y2="344"><stop offset="0.0" stop-color="#b8ea9d" stop-opacity="1.00"/><stop offset="0.25" stop-color="#b8ea9d" stop-opacity="0.85"/><stop offset="0.5" stop-color="#b8ea9d" stop-opacity="0.68"/><stop offset="0.75" stop-color="#b8ea9d" stop-opacity="0.46"/><stop offset="1.0" stop-color="#b8ea9d" stop-opacity="0.05"/></linearGradient><linearGradient id="g72" gradientUnits="userSpaceOnUse" x1="524.5" y1="457.8" x2="619.4" y2="452.2"><stop offset="0.0" stop-color="#dce39d" stop-opacity="1.00"/><stop offset="0.25" stop-color="#dce39d" stop-opacity="0.85"/><stop offset="0.5" stop-color="#dce39d" stop-opacity="0.68"/><stop offset="0.75" stop-color="#dce39d" stop-opacity="0.46"/><stop offset="1.0" stop-color="#dce39d" stop-opacity="0.05"/></linearGradient><linearGradient id="g73" gradientUnits="userSpaceOnUse" x1="569.4" y1="461.3" x2="488.7" y2="405.5"><stop offset="0.0" stop-color="#cec696" stop-opacity="1.00"/><stop offset="0.25" stop-color="#cec696" stop-opacity="0.85"/><stop offset="0.5" stop-color="#cec696" stop-opacity="0.68"/><stop offset="0.75" stop-color="#cec696" stop-opacity="0.46"/><stop offset="1.0" stop-color="#cec696" stop-opacity="0.05"/></linearGradient><linearGradient id="g74" gradientUnits="userSpaceOnUse" x1="487.8" y1="484.7" x2="560.8" y2="417.1"><stop offset="0.0" stop-color="#bfff9d" stop-opacity="1.00"/><stop offset="0.25" stop-color="#bfff9d" stop-opacity="0.85"/><stop offset="0.5" stop-color="#bfff9d" stop-opacity="0.68"/><stop offset="0.75" stop-color="#bfff9d" stop-opacity="0.46"/><stop offset="1.0" stop-color="#bfff9d" stop-opacity="0.05"/></linearGradient><linearGradient id="g75" gradientUnits="userSpaceOnUse" x1="600.2" y1="447.8" x2="684.3" y2="395"><stop offset="0.0" stop-color="#ffbf9d" stop-opacity="1.00"/><stop offset="0.25" stop-color="#ffbf9d" stop-opacity="0.85"/><stop offset="0.5" stop-color="#ffbf9d" stop-opacity="0.68"/><stop offset="0.75" stop-color="#ffbf9d" stop-opacity="0.46"/><stop offset="1.0" stop-color="#ffbf9d" stop-opacity="0.05"/></linearGradient><linearGradient id="g76" gradientUnits="userSpaceOnUse" x1="621.7" y1="458.8" x2="600.2" y2="370"><stop offset="0.0" stop-color="#ffdc96" stop-opacity="1.00"/><stop offset="0.25" stop-color="#ffdc96" stop-opacity="0.85"/><stop offset="0.5" stop-color="#ffdc96" stop-opacity="0.68"/><stop offset="0.75" stop-color="#ffdc96" stop-opacity="0.46"/><stop offset="1.0" stop-color="#ffdc96" stop-opacity="0.05"/></linearGradient><linearGradient id="g77" gradientUnits="userSpaceOnUse" x1="638.2" y1="530.4" x2="656.4" y2="433.4"><stop offset="0.0" stop-color="#ffea96" stop-opacity="1.00"/><stop offset="0.25" stop-color="#ffea96" stop-opacity="0.85"/><stop offset="0.5" stop-color="#ffea96" stop-opacity="0.68"/><stop offset="0.75" stop-color="#ffea96" stop-opacity="0.46"/><stop offset="1.0" stop-color="#ffea96" stop-opacity="0.05"/></linearGradient><linearGradient id="g78" gradientUnits="userSpaceOnUse" x1="553.7" y1="560.2" x2="615.5" y2="484.3"><stop offset="0.0" stop-color="#c6ff9d" stop-opacity="1.00"/><stop offset="0.25" stop-color="#c6ff9d" stop-opacity="0.85"/><stop offset="0.5" stop-color="#c6ff9d" stop-opacity="0.68"/><stop offset="0.75" stop-color="#c6ff9d" stop-opacity="0.46"/><stop offset="1.0" stop-color="#c6ff9d" stop-opacity="0.05"/></linearGradient><linearGradient id="g79" gradientUnits="userSpaceOnUse" x1="661.8" y1="377.3" x2="611.5" y2="292.6"><stop offset="0.0" stop-color="#e3ff9d" stop-opacity="1.00"/><stop offset="0.25" stop-color="#e3ff9d" stop-opacity="0.85"/><stop offset="0.5" stop-color="#e3ff9d" stop-opacity="0.68"/><stop offset="0.75" stop-color="#e3ff9d" stop-opacity="0.46"/><stop offset="1.0" stop-color="#e3ff9d" stop-opacity="0.05"/></linearGradient><linearGradient id="g80" gradientUnits="userSpaceOnUse" x1="670.9" y1="390.6" x2="681.4" y2="291.7"><stop offset="0.0" stop-color="#ffbf9d" stop-opacity="1.00"/><stop offset="0.25" stop-color="#ffbf9d" stop-opacity="0.85"/><stop offset="0.5" stop-color="#ffbf9d" stop-opacity="0.68"/><stop offset="0.75" stop-color="#ffbf9d" stop-opacity="0.46"/><stop offset="1.0" stop-color="#ffbf9d" stop-opacity="0.05"/></linearGradient><linearGradient id="g81" gradientUnits="userSpaceOnUse" x1="666.1" y1="404.2" x2="764" y2="393"><stop offset="0.0" stop-color="#c6ff9d" stop-opacity="1.00"/><stop offset="0.25" stop-color="#c6ff9d" stop-opacity="0.85"/><stop offset="0.5" stop-color="#c6ff9d" stop-opacity="0.68"/><stop offset="0.75" stop-color="#c6ff9d" stop-opacity="0.46"/><stop offset="1.0" stop-color="#c6ff9d" stop-opacity="0.05"/></linearGradient><linearGradient id="g82" gradientUnits="userSpaceOnUse" x1="770.4" y1="398.2" x2="715" y2="316"><stop offset="0.0" stop-color="#eaff9d" stop-opacity="1.00"/><stop offset="0.25" stop-color="#eaff9d" stop-opacity="0.85"/><stop offset="0.5" stop-color="#eaff9d" stop-opacity="0.68"/><stop offset="0.75" stop-color="#eaff9d" stop-opacity="0.46"/><stop offset="1.0" stop-color="#eaff9d" stop-opacity="0.05"/></linearGradient><linearGradient id="g83" gradientUnits="userSpaceOnUse" x1="814.4" y1="408" x2="893" y2="346.6"><stop offset="0.0" stop-color="#ffce9d" stop-opacity="1.00"/><stop offset="0.25" stop-color="#ffce9d" stop-opacity="0.85"/><stop offset="0.5" stop-color="#ffce9d" stop-opacity="0.68"/><stop offset="0.75" stop-color="#ffce9d" stop-opacity="0.46"/><stop offset="1.0" stop-color="#ffce9d" stop-opacity="0.05"/></linearGradient><linearGradient id="g84" gradientUnits="userSpaceOnUse" x1="797.7" y1="439.5" x2="701.6" y2="416.1"><stop offset="0.0" stop-color="#ffea96" stop-opacity="1.00"/><stop offset="0.25" stop-color="#ffea96" stop-opacity="0.85"/><stop offset="0.5" stop-color="#ffea96" stop-opacity="0.68"/><stop offset="0.75" stop-color="#ffea96" stop-opacity="0.46"/><stop offset="1.0" stop-color="#ffea96" stop-opacity="0.05"/></linearGradient><linearGradient id="g85" gradientUnits="userSpaceOnUse" x1="664.7" y1="484.3" x2="644.9" y2="387.3"><stop offset="0.0" stop-color="#ffea96" stop-opacity="1.00"/><stop offset="0.25" stop-color="#ffea96" stop-opacity="0.85"/><stop offset="0.5" stop-color="#ffea96" stop-opacity="0.68"/><stop offset="0.75" stop-color="#ffea96" stop-opacity="0.46"/><stop offset="1.0" stop-color="#ffea96" stop-opacity="0.05"/></linearGradient><linearGradient id="g86" gradientUnits="userSpaceOnUse" x1="766.5" y1="511.2" x2="826.5" y2="435.3"><stop offset="0.0" stop-color="#b8d59d" stop-opacity="1.00"/><stop offset="0.25" stop-color="#b8d59d" stop-opacity="0.85"/><stop offset="0.5" stop-color="#b8d59d" stop-opacity="0.68"/><stop offset="0.75" stop-color="#b8d59d" stop-opacity="0.46"/><stop offset="1.0" stop-color="#b8d59d" stop-opacity="0.05"/></linearGradient><linearGradient id="g87" gradientUnits="userSpaceOnUse" x1="664.5" y1="533.7" x2="758.3" y2="507.4"><stop offset="0.0" stop-color="#ceea96" stop-opacity="1.00"/><stop offset="0.25" stop-color="#ceea96" stop-opacity="0.85"/><stop offset="0.5" stop-color="#ceea96" stop-opacity="0.68"/><stop offset="0.75" stop-color="#ceea96" stop-opacity="0.46"/><stop offset="1.0" stop-color="#ceea96" stop-opacity="0.05"/></linearGradient><linearGradient id="g88" gradientUnits="userSpaceOnUse" x1="842.2" y1="394" x2="823" y2="298"><stop offset="0.0" stop-color="#e3f99d" stop-opacity="1.00"/><stop offset="0.25" stop-color="#e3f99d" stop-opacity="0.85"/><stop offset="0.5" stop-color="#e3f99d" stop-opacity="0.68"/><stop offset="0.75" stop-color="#e3f99d" stop-opacity="0.46"/><stop offset="1.0" stop-color="#e3f99d" stop-opacity="0.05"/></linearGradient><linearGradient id="g89" gradientUnits="userSpaceOnUse" x1="867" y1="403.1" x2="938.3" y2="334.8"><stop offset="0.0" stop-color="#ffb89d" stop-opacity="1.00"/><stop offset="0.25" stop-color="#ffb89d" stop-opacity="0.85"/><stop offset="0.5" stop-color="#ffb89d" stop-opacity="0.68"/><stop offset="0.75" stop-color="#ffb89d" stop-opacity="0.46"/><stop offset="1.0" stop-color="#ffb89d" stop-opacity="0.05"/></linearGradient><linearGradient id="g90" gradientUnits="userSpaceOnUse" x1="936.2" y1="396.6" x2="973.8" y2="305.2"><stop offset="0.0" stop-color="#fff296" stop-opacity="1.00"/><stop offset="0.25" stop-color="#fff296" stop-opacity="0.85"/><stop offset="0.5" stop-color="#fff296" stop-opacity="0.68"/><stop offset="0.75" stop-color="#fff296" stop-opacity="0.46"/><stop offset="1.0" stop-color="#fff296" stop-opacity="0.05"/></linearGradient><linearGradient id="g91" gradientUnits="userSpaceOnUse" x1="961" y1="412.8" x2="937.4" y2="316"><stop offset="0.0" stop-color="#d5f29d" stop-opacity="1.00"/><stop offset="0.25" stop-color="#d5f29d" stop-opacity="0.85"/><stop offset="0.5" stop-color="#d5f29d" stop-opacity="0.68"/><stop offset="0.75" stop-color="#d5f29d" stop-opacity="0.46"/><stop offset="1.0" stop-color="#d5f29d" stop-opacity="0.05"/></linearGradient><linearGradient id="g92" gradientUnits="userSpaceOnUse" x1="995.5" y1="405.1" x2="992.5" y2="306.2"><stop offset="0.0" stop-color="#ffff96" stop-opacity="1.00"/><stop offset="0.25" stop-color="#ffff96" stop-opacity="0.85"/><stop offset="0.5" stop-color="#ffff96" stop-opacity="0.68"/><stop offset="0.75" stop-color="#ffff96" stop-opacity="0.46"/><stop offset="1.0" stop-color="#ffff96" stop-opacity="0.05"/></linearGradient><linearGradient id="g93" gradientUnits="userSpaceOnUse" x1="1001.4" y1="387.1" x2="1013" y2="333"><stop offset="0.0" stop-color="#b1c69d" stop-opacity="1.00"/><stop offset="0.25" stop-color="#b1c69d" stop-opacity="0.85"/><stop offset="0.5" stop-color="#b1c69d" stop-opacity="0.68"/><stop offset="0.75" stop-color="#b1c69d" stop-opacity="0.46"/><stop offset="1.0" stop-color="#b1c69d" stop-opacity="0.05"/></linearGradient><linearGradient id="g94" gradientUnits="userSpaceOnUse" x1="906.2" y1="468.9" x2="915.7" y2="370"><stop offset="0.0" stop-color="#f9f996" stop-opacity="1.00"/><stop offset="0.25" stop-color="#f9f996" stop-opacity="0.85"/><stop offset="0.5" stop-color="#f9f996" stop-opacity="0.68"/><stop offset="0.75" stop-color="#f9f996" stop-opacity="0.46"/><stop offset="1.0" stop-color="#f9f996" stop-opacity="0.05"/></linearGradient><linearGradient id="g95" gradientUnits="userSpaceOnUse" x1="944.5" y1="503" x2="974.8" y2="410.4"><stop offset="0.0" stop-color="#eace96" stop-opacity="1.00"/><stop offset="0.25" stop-color="#eace96" stop-opacity="0.85"/><stop offset="0.5" stop-color="#eace96" stop-opacity="0.68"/><stop offset="0.75" stop-color="#eace96" stop-opacity="0.46"/><stop offset="1.0" stop-color="#eace96" stop-opacity="0.05"/></linearGradient><linearGradient id="g96" gradientUnits="userSpaceOnUse" x1="839.8" y1="508.5" x2="767.9" y2="441.1"><stop offset="0.0" stop-color="#f2ff9d" stop-opacity="1.00"/><stop offset="0.25" stop-color="#f2ff9d" stop-opacity="0.85"/><stop offset="0.5" stop-color="#f2ff9d" stop-opacity="0.68"/><stop offset="0.75" stop-color="#f2ff9d" stop-opacity="0.46"/><stop offset="1.0" stop-color="#f2ff9d" stop-opacity="0.05"/></linearGradient><linearGradient id="g97" gradientUnits="userSpaceOnUse" x1="835.9" y1="531.2" x2="741" y2="506.4"><stop offset="0.0" stop-color="#f2e396" stop-opacity="1.00"/><stop offset="0.25" stop-color="#f2e396" stop-opacity="0.85"/><stop offset="0.5" stop-color="#f2e396" stop-opacity="0.68"/><stop offset="0.75" stop-color="#f2e396" stop-opacity="0.46"/><stop offset="1.0" stop-color="#f2e396" stop-opacity="0.05"/></linearGradient><linearGradient id="g98" gradientUnits="userSpaceOnUse" x1="901.9" y1="530.6" x2="860.5" y2="444.9"><stop offset="0.0" stop-color="#bfaa96" stop-opacity="1.00"/><stop offset="0.25" stop-color="#bfaa96" stop-opacity="0.85"/><stop offset="0.5" stop-color="#bfaa96" stop-opacity="0.68"/><stop offset="0.75" stop-color="#bfaa96" stop-opacity="0.46"/><stop offset="1.0" stop-color="#bfaa96" stop-opacity="0.05"/></linearGradient><linearGradient id="g99" gradientUnits="userSpaceOnUse" x1="939.5" y1="544.8" x2="887.1" y2="462.6"><stop offset="0.0" stop-color="#bff99d" stop-opacity="1.00"/><stop offset="0.25" stop-color="#bff99d" stop-opacity="0.85"/><stop offset="0.5" stop-color="#bff99d" stop-opacity="0.68"/><stop offset="0.75" stop-color="#bff99d" stop-opacity="0.46"/><stop offset="1.0" stop-color="#bff99d" stop-opacity="0.05"/></linearGradient><linearGradient id="g100" gradientUnits="userSpaceOnUse" x1="851.3" y1="552.9" x2="893" y2="463.6"><stop offset="0.0" stop-color="#ffff96" stop-opacity="1.00"/><stop offset="0.25" stop-color="#ffff96" stop-opacity="0.85"/><stop offset="0.5" stop-color="#ffff96" stop-opacity="0.68"/><stop offset="0.75" stop-color="#ffff96" stop-opacity="0.46"/><stop offset="1.0" stop-color="#ffff96" stop-opacity="0.05"/></linearGradient><linearGradient id="g101" gradientUnits="userSpaceOnUse" x1="995.9" y1="547.7" x2="1023" y2="466.6"><stop offset="0.0" stop-color="#f9f996" stop-opacity="1.00"/><stop offset="0.25" stop-color="#f9f996" stop-opacity="0.87"/><stop offset="0.5" stop-color="#f9f996" stop-opacity="0.73"/><stop offset="0.75" stop-color="#f9f996" stop-opacity="0.56"/><stop offset="1.0" stop-color="#f9f996" stop-opacity="0.33"/></linearGradient><linearGradient id="g102" gradientUnits="userSpaceOnUse" x1="1023" y1="466.6" x2="1021" y2="453.7"><stop offset="0.0" stop-color="#f9f996" stop-opacity="0.33"/><stop offset="0.25" stop-color="#f9f996" stop-opacity="0.29"/><stop offset="0.5" stop-color="#f9f996" stop-opacity="0.24"/><stop offset="0.75" stop-color="#f9f996" stop-opacity="0.17"/><stop offset="1.0" stop-color="#f9f996" stop-opacity="0.05"/></linearGradient><linearGradient id="g103" gradientUnits="userSpaceOnUse" x1="1010.3" y1="542.8" x2="974.8" y2="450.8"><stop offset="0.0" stop-color="#ffff96" stop-opacity="1.00"/><stop offset="0.25" stop-color="#ffff96" stop-opacity="0.85"/><stop offset="0.5" stop-color="#ffff96" stop-opacity="0.68"/><stop offset="0.75" stop-color="#ffff96" stop-opacity="0.46"/><stop offset="1.0" stop-color="#ffff96" stop-opacity="0.05"/></linearGradient><linearGradient id="g104" gradientUnits="userSpaceOnUse" x1="471.4" y1="562.1" x2="460" y2="508.3"><stop offset="0" stop-color="#fff0b0" stop-opacity="0.7"/><stop offset="1" stop-color="#fff0b0" stop-opacity="0.1"/></linearGradient><linearGradient id="g105" gradientUnits="userSpaceOnUse" x1="828" y1="509.9" x2="872.3" y2="562.1"><stop offset="0" stop-color="#f0c8b8" stop-opacity="0.7"/><stop offset="1" stop-color="#f0c8b8" stop-opacity="0.1"/></linearGradient><linearGradient id="g106" gradientUnits="userSpaceOnUse" x1="680.5" y1="562.1" x2="707.4" y2="485.3"><stop offset="0" stop-color="#e0d0c0" stop-opacity="0.7"/><stop offset="1" stop-color="#e0d0c0" stop-opacity="0.1"/></linearGradient><linearGradient id="g107" gradientUnits="userSpaceOnUse" x1="754.4" y1="519.9" x2="806.3" y2="562"><stop offset="0" stop-color="#d8f0c8" stop-opacity="0.7"/><stop offset="1" stop-color="#d8f0c8" stop-opacity="0.1"/></linearGradient><linearGradient id="g108" gradientUnits="userSpaceOnUse" x1="777.5" y1="504.5" x2="819.7" y2="562.1"><stop offset="0" stop-color="#f0dcc0" stop-opacity="0.7"/><stop offset="1" stop-color="#f0dcc0" stop-opacity="0.1"/></linearGradient><linearGradient id="g109" gradientUnits="userSpaceOnUse" x1="623.2" y1="562" x2="637.6" y2="537"><stop offset="0" stop-color="#f0d0c8" stop-opacity="0.7"/><stop offset="1" stop-color="#f0d0c8" stop-opacity="0.1"/></linearGradient></defs><g clip-path="url(#cclip)"><rect x="477.75" y="37.45" width="5.5" height="5.5" fill="#e0b000"/><rect x="544.35" y="66.85" width="5.5" height="5.5" fill="#d85400"/><rect x="584.95" y="54.35" width="5.5" height="5.5" fill="#f0a000"/><rect x="588.95" y="62.25" width="5.5" height="5.5" fill="#a02000"/><rect x="550.35" y="79.85" width="5.5" height="5.5" fill="#dccc00"/><rect x="631.75" y="31.85" width="5.5" height="5.5" fill="#406010"/><rect x="609.85" y="79.65" width="5.5" height="5.5" fill="#e09000"/><rect x="498.15" y="137.05" width="5.5" height="5.5" fill="#401000"/><rect x="513.05" y="159.35" width="5.5" height="5.5" fill="#90e020"/><rect x="625.55" y="161.45" width="5.5" height="5.5" fill="#c0f000"/><rect x="631.25" y="164.45" width="5.5" height="5.5" fill="#605010"/><rect x="465.55" y="183.15" width="5.5" height="5.5" fill="#406010"/><rect x="671.15" y="13.15" width="5.5" height="5.5" fill="#503000"/><rect x="651.15" y="22.85" width="5.5" height="5.5" fill="#305010"/><rect x="678.25" y="36.95" width="5.5" height="5.5" fill="#901000"/><rect x="682.35" y="67.45" width="5.5" height="5.5" fill="#606000"/><rect x="802.15" y="35.05" width="5.5" height="5.5" fill="#304000"/><rect x="827.45" y="15.55" width="5.5" height="5.5" fill="#70a000"/><rect x="740.55" y="156.55" width="5.5" height="5.5" fill="#e04010"/><rect x="676.15" y="178.85" width="5.5" height="5.5" fill="#702000"/><rect x="788.65" y="154.45" width="5.5" height="5.5" fill="#d0a000"/><rect x="789.45" y="159.15" width="5.5" height="5.5" fill="#f0f000"/><rect x="804.95" y="151.85" width="5.5" height="5.5" fill="#40e010"/><rect x="813.95" y="148.55" width="5.5" height="5.5" fill="#b03010"/><rect x="833.55" y="18.35" width="5.5" height="5.5" fill="#907000"/><rect x="865.65" y="-1.25" width="5.5" height="5.5" fill="#a07000"/><rect x="883.95" y="17.55" width="5.5" height="5.5" fill="#b0b000"/><rect x="892.25" y="19.95" width="5.5" height="5.5" fill="#f02020"/><rect x="939.55" y="23.45" width="5.5" height="5.5" fill="#903010"/><rect x="979.75" y="90.45" width="5.5" height="5.5" fill="#80d000"/><rect x="970.25" y="112.55" width="5.5" height="5.5" fill="#903000"/><rect x="903.85" y="176.95" width="5.5" height="5.5" fill="#904000"/><rect x="904.05" y="154.85" width="5.5" height="5.5" fill="#106000"/><rect x="834.15" y="177.55" width="5.5" height="5.5" fill="#d0a000"/><rect x="854.85" y="190.35" width="5.5" height="5.5" fill="#402000"/><rect x="975.95" y="191.75" width="5.5" height="5.5" fill="#40e020"/><rect x="1006.55" y="192.95" width="5.5" height="5.5" fill="#60f020"/><rect x="521.75" y="256.55" width="5.5" height="5.5" fill="#e02020"/><rect x="534.65" y="234.15" width="5.5" height="5.5" fill="#c05000"/><rect x="536.35" y="279.55" width="5.5" height="5.5" fill="#200800"/><rect x="544.35" y="277.35" width="5.5" height="5.5" fill="#808000"/><rect x="548.45" y="283.55" width="5.5" height="5.5" fill="#f06000"/><rect x="581.75" y="269.25" width="5.5" height="5.5" fill="#b04010"/><rect x="546.75" y="311.05" width="5.5" height="5.5" fill="#d0e000"/><rect x="563.45" y="328.25" width="5.5" height="5.5" fill="#20e010"/><rect x="595.05" y="331.65" width="5.5" height="5.5" fill="#302010"/><rect x="475.05" y="373.55" width="5.5" height="5.5" fill="#d0d000"/><rect x="799.75" y="200.95" width="5.5" height="5.5" fill="#b04010"/><rect x="731.05" y="253.35" width="5.5" height="5.5" fill="#80e010"/><rect x="675.85" y="265.15" width="5.5" height="5.5" fill="#20a010"/><rect x="655.75" y="276.75" width="5.5" height="5.5" fill="#40e010"/><rect x="650.55" y="304.45" width="5.5" height="5.5" fill="#c07000"/><rect x="767.95" y="304.85" width="5.5" height="5.5" fill="#c01010"/><rect x="797.45" y="310.45" width="5.5" height="5.5" fill="#a0e000"/><rect x="828.05" y="370.75" width="5.5" height="5.5" fill="#e09000"/><rect x="828.75" y="377.35" width="5.5" height="5.5" fill="#901000"/><rect x="850.05" y="204.95" width="5.5" height="5.5" fill="#60e010"/><rect x="897.55" y="216.75" width="5.5" height="5.5" fill="#106010"/><rect x="963.75" y="240.55" width="5.5" height="5.5" fill="#10c010"/><rect x="979.95" y="281.75" width="5.5" height="5.5" fill="#e0b000"/><rect x="951.75" y="300.05" width="5.5" height="5.5" fill="#a09000"/><rect x="883.35" y="306.75" width="5.5" height="5.5" fill="#40c010"/><rect x="881.05" y="315.85" width="5.5" height="5.5" fill="#908000"/><rect x="885.55" y="332.55" width="5.5" height="5.5" fill="#90c010"/><rect x="895.25" y="362.55" width="5.5" height="5.5" fill="#308010"/><rect x="988.05" y="334.55" width="5.5" height="5.5" fill="#906010"/><rect x="1010.45" y="330.45" width="5.5" height="5.5" fill="#103000"/><rect x="522.45" y="405.05" width="5.5" height="5.5" fill="#807000"/><rect x="488.85" y="426.25" width="5.5" height="5.5" fill="#209010"/><rect x="521.75" y="455.05" width="5.5" height="5.5" fill="#708010"/><rect x="566.65" y="458.55" width="5.5" height="5.5" fill="#504000"/><rect x="485.05" y="481.95" width="5.5" height="5.5" fill="#30e010"/><rect x="597.45" y="445.05" width="5.5" height="5.5" fill="#f03010"/><rect x="618.95" y="456.05" width="5.5" height="5.5" fill="#f07000"/><rect x="635.45" y="527.65" width="5.5" height="5.5" fill="#c09000"/><rect x="550.95" y="557.45" width="5.5" height="5.5" fill="#40c010"/><rect x="659.05" y="374.55" width="5.5" height="5.5" fill="#80e010"/><rect x="668.15" y="387.85" width="5.5" height="5.5" fill="#e03010"/><rect x="663.35" y="401.45" width="5.5" height="5.5" fill="#40e010"/><rect x="767.65" y="395.45" width="5.5" height="5.5" fill="#90e010"/><rect x="811.65" y="405.25" width="5.5" height="5.5" fill="#f05010"/><rect x="794.95" y="436.75" width="5.5" height="5.5" fill="#d09000"/><rect x="661.95" y="481.55" width="5.5" height="5.5" fill="#e09000"/><rect x="763.75" y="508.45" width="5.5" height="5.5" fill="#206010"/><rect x="661.75" y="530.95" width="5.5" height="5.5" fill="#509000"/><rect x="839.45" y="391.25" width="5.5" height="5.5" fill="#80b010"/><rect x="864.25" y="400.35" width="5.5" height="5.5" fill="#e02010"/><rect x="933.45" y="393.85" width="5.5" height="5.5" fill="#f0a000"/><rect x="958.25" y="410.05" width="5.5" height="5.5" fill="#60a010"/><rect x="992.75" y="402.35" width="5.5" height="5.5" fill="#c0c000"/><rect x="998.65" y="384.35" width="5.5" height="5.5" fill="#104010"/><rect x="903.45" y="466.15" width="5.5" height="5.5" fill="#b0b000"/><rect x="941.75" y="500.25" width="5.5" height="5.5" fill="#905000"/><rect x="837.05" y="505.75" width="5.5" height="5.5" fill="#a0e010"/><rect x="833.15" y="528.45" width="5.5" height="5.5" fill="#a08000"/><rect x="899.15" y="527.85" width="5.5" height="5.5" fill="#300000"/><rect x="936.75" y="542.05" width="5.5" height="5.5" fill="#30b010"/><rect x="848.55" y="550.15" width="5.5" height="5.5" fill="#f0f000"/><rect x="993.15" y="544.95" width="5.5" height="5.5" fill="#b0b000"/><rect x="1007.55" y="540.05" width="5.5" height="5.5" fill="#f0c000"/><line x1="480.5" y1="40.2" x2="471.1" y2="0" stroke="url(#g0)" stroke-width="1.2"/><line x1="547.1" y1="69.6" x2="560.6" y2="0" stroke="url(#g1)" stroke-width="1.2"/><line x1="587.7" y1="57.1" x2="622.7" y2="0" stroke="url(#g2)" stroke-width="1.2"/><line x1="591.7" y1="65" x2="620.9" y2="1.9" stroke="url(#g3)" stroke-width="1.2"/><line x1="553.1" y1="82.6" x2="634" y2="34" stroke="url(#g4)" stroke-width="1.2"/><line x1="634.5" y1="34.6" x2="714" y2="24.3" stroke="url(#g5)" stroke-width="1.2"/><line x1="612.6" y1="82.4" x2="664.5" y2="0" stroke="url(#g6)" stroke-width="1.2"/><line x1="500.9" y1="139.8" x2="460.8" y2="108.6" stroke="url(#g7)" stroke-width="1.2"/><line x1="460.8" y1="108.6" x2="497.3" y2="80.5" stroke="url(#g8)" stroke-width="1.2"/><line x1="515.8" y1="162.1" x2="576" y2="82.4" stroke="url(#g9)" stroke-width="1.2"/><line x1="628.3" y1="164.2" x2="708.5" y2="103.9" stroke="url(#g10)" stroke-width="1.2"/><line x1="634" y1="167.2" x2="553.5" y2="115.1" stroke="url(#g11)" stroke-width="1.2"/><line x1="468.3" y1="185.9" x2="534.7" y2="114.2" stroke="url(#g12)" stroke-width="1.2"/><line x1="673.9" y1="15.9" x2="678.6" y2="0" stroke="url(#g13)" stroke-width="1.2"/><line x1="653.9" y1="25.6" x2="751.6" y2="36.5" stroke="url(#g14)" stroke-width="1.2"/><line x1="681" y1="39.7" x2="766.5" y2="4.7" stroke="url(#g15)" stroke-width="1.2"/><line x1="685.1" y1="70.2" x2="679" y2="28" stroke="url(#g16)" stroke-width="1.2"/><line x1="804.9" y1="37.8" x2="755.3" y2="0" stroke="url(#g17)" stroke-width="1.2"/><line x1="830.2" y1="18.3" x2="809.6" y2="0" stroke="url(#g18)" stroke-width="1.2"/><line x1="743.3" y1="159.3" x2="677.6" y2="86.1" stroke="url(#g19)" stroke-width="1.2"/><line x1="678.9" y1="181.6" x2="700.1" y2="86.1" stroke="url(#g20)" stroke-width="1.2"/><line x1="791.4" y1="157.2" x2="839.8" y2="70.9" stroke="url(#g21)" stroke-width="1.2"/><line x1="792.2" y1="161.9" x2="762.8" y2="67.4" stroke="url(#g22)" stroke-width="1.2"/><line x1="807.7" y1="154.6" x2="827.4" y2="58" stroke="url(#g23)" stroke-width="1.2"/><line x1="816.7" y1="151.3" x2="851.6" y2="60" stroke="url(#g24)" stroke-width="1.2"/><line x1="836.3" y1="21.1" x2="828" y2="5" stroke="url(#g25)" stroke-width="1.2"/><line x1="886.7" y1="20.3" x2="871.3" y2="0" stroke="url(#g26)" stroke-width="1.2"/><line x1="895" y1="22.7" x2="873.3" y2="0" stroke="url(#g27)" stroke-width="1.2"/><line x1="942.3" y1="26.2" x2="846.7" y2="3.9" stroke="url(#g28)" stroke-width="1.2"/><line x1="982.5" y1="93.2" x2="922.2" y2="15.8" stroke="url(#g29)" stroke-width="1.2"/><line x1="973" y1="115.3" x2="876.3" y2="97.5" stroke="url(#g30)" stroke-width="1.2"/><line x1="906.6" y1="179.7" x2="969.9" y2="113.3" stroke="url(#g31)" stroke-width="1.2"/><line x1="906.8" y1="157.6" x2="859.5" y2="70.9" stroke="url(#g32)" stroke-width="1.2"/><line x1="836.9" y1="180.3" x2="909.8" y2="112.3" stroke="url(#g33)" stroke-width="1.2"/><line x1="857.6" y1="193.1" x2="944.3" y2="155.7" stroke="url(#g34)" stroke-width="1.2"/><line x1="978.7" y1="194.5" x2="1023" y2="184.8" stroke="url(#g35)" stroke-width="1.2"/><line x1="1023" y1="184.8" x2="971.8" y2="173.4" stroke="url(#g36)" stroke-width="1.2"/><line x1="1009.3" y1="195.7" x2="1023" y2="141.9" stroke="url(#g37)" stroke-width="1.2"/><line x1="1023" y1="141.9" x2="1013.2" y2="99.5" stroke="url(#g38)" stroke-width="1.2"/><line x1="524.5" y1="259.3" x2="469.2" y2="186.9" stroke="url(#g39)" stroke-width="1.2"/><line x1="537.4" y1="236.9" x2="486" y2="152.6" stroke="url(#g40)" stroke-width="1.2"/><line x1="539.1" y1="282.3" x2="474.8" y2="229" stroke="url(#g41)" stroke-width="1.2"/><line x1="547.1" y1="280.1" x2="589" y2="190.6" stroke="url(#g42)" stroke-width="1.2"/><line x1="551.2" y1="286.3" x2="635.8" y2="234.6" stroke="url(#g43)" stroke-width="1.2"/><line x1="584.5" y1="272" x2="486.1" y2="259.9" stroke="url(#g44)" stroke-width="1.2"/><line x1="549.5" y1="313.8" x2="461.7" y2="269.2" stroke="url(#g45)" stroke-width="1.2"/><line x1="566.2" y1="331" x2="561.9" y2="232.7" stroke="url(#g46)" stroke-width="1.2"/><line x1="597.8" y1="334.4" x2="591.8" y2="254.3" stroke="url(#g47)" stroke-width="1.2"/><line x1="477.8" y1="376.3" x2="490.8" y2="278.6" stroke="url(#g48)" stroke-width="1.2"/><line x1="802.5" y1="203.7" x2="839" y2="112" stroke="url(#g49)" stroke-width="1.2"/><line x1="733.8" y1="256.1" x2="644.9" y2="213.1" stroke="url(#g50)" stroke-width="1.2"/><line x1="678.6" y1="267.9" x2="777.8" y2="265.5" stroke="url(#g51)" stroke-width="1.2"/><line x1="658.5" y1="279.5" x2="757.2" y2="269.6" stroke="url(#g52)" stroke-width="1.2"/><line x1="653.3" y1="307.2" x2="589" y2="232.7" stroke="url(#g53)" stroke-width="1.2"/><line x1="770.7" y1="307.6" x2="772.5" y2="208.4" stroke="url(#g54)" stroke-width="1.2"/><line x1="800.2" y1="313.2" x2="779.3" y2="215.9" stroke="url(#g55)" stroke-width="1.2"/><line x1="830.8" y1="373.5" x2="912.7" y2="319" stroke="url(#g56)" stroke-width="1.2"/><line x1="831.5" y1="380.1" x2="916.7" y2="331.8" stroke="url(#g57)" stroke-width="1.2"/><line x1="852.8" y1="207.7" x2="916.7" y2="131" stroke="url(#g58)" stroke-width="1.2"/><line x1="900.3" y1="219.5" x2="851.6" y2="135" stroke="url(#g59)" stroke-width="1.2"/><line x1="966.5" y1="243.3" x2="1022" y2="219.5" stroke="url(#g60)" stroke-width="1.2"/><line x1="1022" y1="219.5" x2="989.6" y2="204.7" stroke="url(#g61)" stroke-width="1.2"/><line x1="982.7" y1="284.5" x2="951.2" y2="190.9" stroke="url(#g62)" stroke-width="1.2"/><line x1="954.5" y1="302.8" x2="857.6" y2="284.5" stroke="url(#g63)" stroke-width="1.2"/><line x1="886.1" y1="309.5" x2="973.8" y2="269.7" stroke="url(#g64)" stroke-width="1.2"/><line x1="883.8" y1="318.6" x2="950.2" y2="246.1" stroke="url(#g65)" stroke-width="1.2"/><line x1="888.3" y1="335.3" x2="800" y2="302" stroke="url(#g66)" stroke-width="1.2"/><line x1="898" y1="365.3" x2="823" y2="303" stroke="url(#g67)" stroke-width="1.2"/><line x1="990.8" y1="337.3" x2="893" y2="321" stroke="url(#g68)" stroke-width="1.2"/><line x1="1013.2" y1="333.2" x2="1022" y2="246" stroke="url(#g69)" stroke-width="1.2"/><line x1="525.2" y1="407.8" x2="460.8" y2="332.9" stroke="url(#g70)" stroke-width="1.2"/><line x1="491.6" y1="429" x2="460.8" y2="344" stroke="url(#g71)" stroke-width="1.2"/><line x1="524.5" y1="457.8" x2="619.4" y2="452.2" stroke="url(#g72)" stroke-width="1.2"/><line x1="569.4" y1="461.3" x2="488.7" y2="405.5" stroke="url(#g73)" stroke-width="1.2"/><line x1="487.8" y1="484.7" x2="560.8" y2="417.1" stroke="url(#g74)" stroke-width="1.2"/><line x1="600.2" y1="447.8" x2="684.3" y2="395" stroke="url(#g75)" stroke-width="1.2"/><line x1="621.7" y1="458.8" x2="600.2" y2="370" stroke="url(#g76)" stroke-width="1.2"/><line x1="638.2" y1="530.4" x2="656.4" y2="433.4" stroke="url(#g77)" stroke-width="1.2"/><line x1="553.7" y1="560.2" x2="615.5" y2="484.3" stroke="url(#g78)" stroke-width="1.2"/><line x1="661.8" y1="377.3" x2="611.5" y2="292.6" stroke="url(#g79)" stroke-width="1.2"/><line x1="670.9" y1="390.6" x2="681.4" y2="291.7" stroke="url(#g80)" stroke-width="1.2"/><line x1="666.1" y1="404.2" x2="764" y2="393" stroke="url(#g81)" stroke-width="1.2"/><line x1="770.4" y1="398.2" x2="715" y2="316" stroke="url(#g82)" stroke-width="1.2"/><line x1="814.4" y1="408" x2="893" y2="346.6" stroke="url(#g83)" stroke-width="1.2"/><line x1="797.7" y1="439.5" x2="701.6" y2="416.1" stroke="url(#g84)" stroke-width="1.2"/><line x1="664.7" y1="484.3" x2="644.9" y2="387.3" stroke="url(#g85)" stroke-width="1.2"/><line x1="766.5" y1="511.2" x2="826.5" y2="435.3" stroke="url(#g86)" stroke-width="1.2"/><line x1="664.5" y1="533.7" x2="758.3" y2="507.4" stroke="url(#g87)" stroke-width="1.2"/><line x1="842.2" y1="394" x2="823" y2="298" stroke="url(#g88)" stroke-width="1.2"/><line x1="867" y1="403.1" x2="938.3" y2="334.8" stroke="url(#g89)" stroke-width="1.2"/><line x1="936.2" y1="396.6" x2="973.8" y2="305.2" stroke="url(#g90)" stroke-width="1.2"/><line x1="961" y1="412.8" x2="937.4" y2="316" stroke="url(#g91)" stroke-width="1.2"/><line x1="995.5" y1="405.1" x2="992.5" y2="306.2" stroke="url(#g92)" stroke-width="1.2"/><line x1="1001.4" y1="387.1" x2="1013" y2="333" stroke="url(#g93)" stroke-width="1.2"/><line x1="906.2" y1="468.9" x2="915.7" y2="370" stroke="url(#g94)" stroke-width="1.2"/><line x1="944.5" y1="503" x2="974.8" y2="410.4" stroke="url(#g95)" stroke-width="1.2"/><line x1="839.8" y1="508.5" x2="767.9" y2="441.1" stroke="url(#g96)" stroke-width="1.2"/><line x1="835.9" y1="531.2" x2="741" y2="506.4" stroke="url(#g97)" stroke-width="1.2"/><line x1="901.9" y1="530.6" x2="860.5" y2="444.9" stroke="url(#g98)" stroke-width="1.2"/><line x1="939.5" y1="544.8" x2="887.1" y2="462.6" stroke="url(#g99)" stroke-width="1.2"/><line x1="851.3" y1="552.9" x2="893" y2="463.6" stroke="url(#g100)" stroke-width="1.2"/><line x1="995.9" y1="547.7" x2="1023" y2="466.6" stroke="url(#g101)" stroke-width="1.2"/><line x1="1023" y1="466.6" x2="1021" y2="453.7" stroke="url(#g102)" stroke-width="1.2"/><line x1="1010.3" y1="542.8" x2="974.8" y2="450.8" stroke="url(#g103)" stroke-width="1.2"/><line x1="471.4" y1="562.1" x2="460" y2="508.3" stroke="url(#g104)" stroke-width="1.2"/><line x1="828" y1="509.9" x2="872.3" y2="562.1" stroke="url(#g105)" stroke-width="1.2"/><line x1="680.5" y1="562.1" x2="707.4" y2="485.3" stroke="url(#g106)" stroke-width="1.2"/><line x1="754.4" y1="519.9" x2="806.3" y2="562" stroke="url(#g107)" stroke-width="1.2"/><line x1="777.5" y1="504.5" x2="819.7" y2="562.1" stroke="url(#g108)" stroke-width="1.2"/><line x1="623.2" y1="562" x2="637.6" y2="537" stroke="url(#g109)" stroke-width="1.2"/></g>
</svg>
<div class="hr" style="top:6px"></div>
<div class="hr" style="top:124px"></div>
<svg style="position:absolute;left:1040px;top:10px" width="60" height="110">
<circle cx="26.7" cy="26.4" r="17.8" fill="#fff" stroke="#333" stroke-width="2"/>
<line x1="26.7" y1="26.4" x2="26.7" y2="15" stroke="#333" stroke-width="2"/>
<circle cx="26.7" cy="26.4" r="1.6" fill="#333"/>
<circle cx="26.7" cy="75.6" r="17.8" fill="#ffd0d0" stroke="#333" stroke-width="2"/>
<line x1="26.7" y1="76" x2="15" y2="75.6" stroke="#333" stroke-width="2"/>
<circle cx="26.7" cy="76" r="1.6" fill="#333"/>
</svg>
<div class="lbl" style="left:1091px;top:46px">setup</div>
<div class="lbl" style="left:1092px;top:95px">loop</div>
<div id="state"><div class="st">AllCells: {count:262144}</div><div class="st">Cell: {}</div><div class="st">Display: {clearColor:white}</div><div class="st">Turtle: {count:100}</div><div class="st">height: 512</div><div class="st">loop: {name:loop}</div><div class="st">mousedown: {x:0 y:0}</div><div class="st">mousemove: {x:160.935 y:70.750 time:98}</div><div class="st">setup: {name:setup}</div><div class="st">time: 98</div><div class="st">width: 512</div></div>
<div id="fps">34.2 msecs/frame (29.3 fps)</div>
<div id="fs">Full Screen</div>
</body></html>
